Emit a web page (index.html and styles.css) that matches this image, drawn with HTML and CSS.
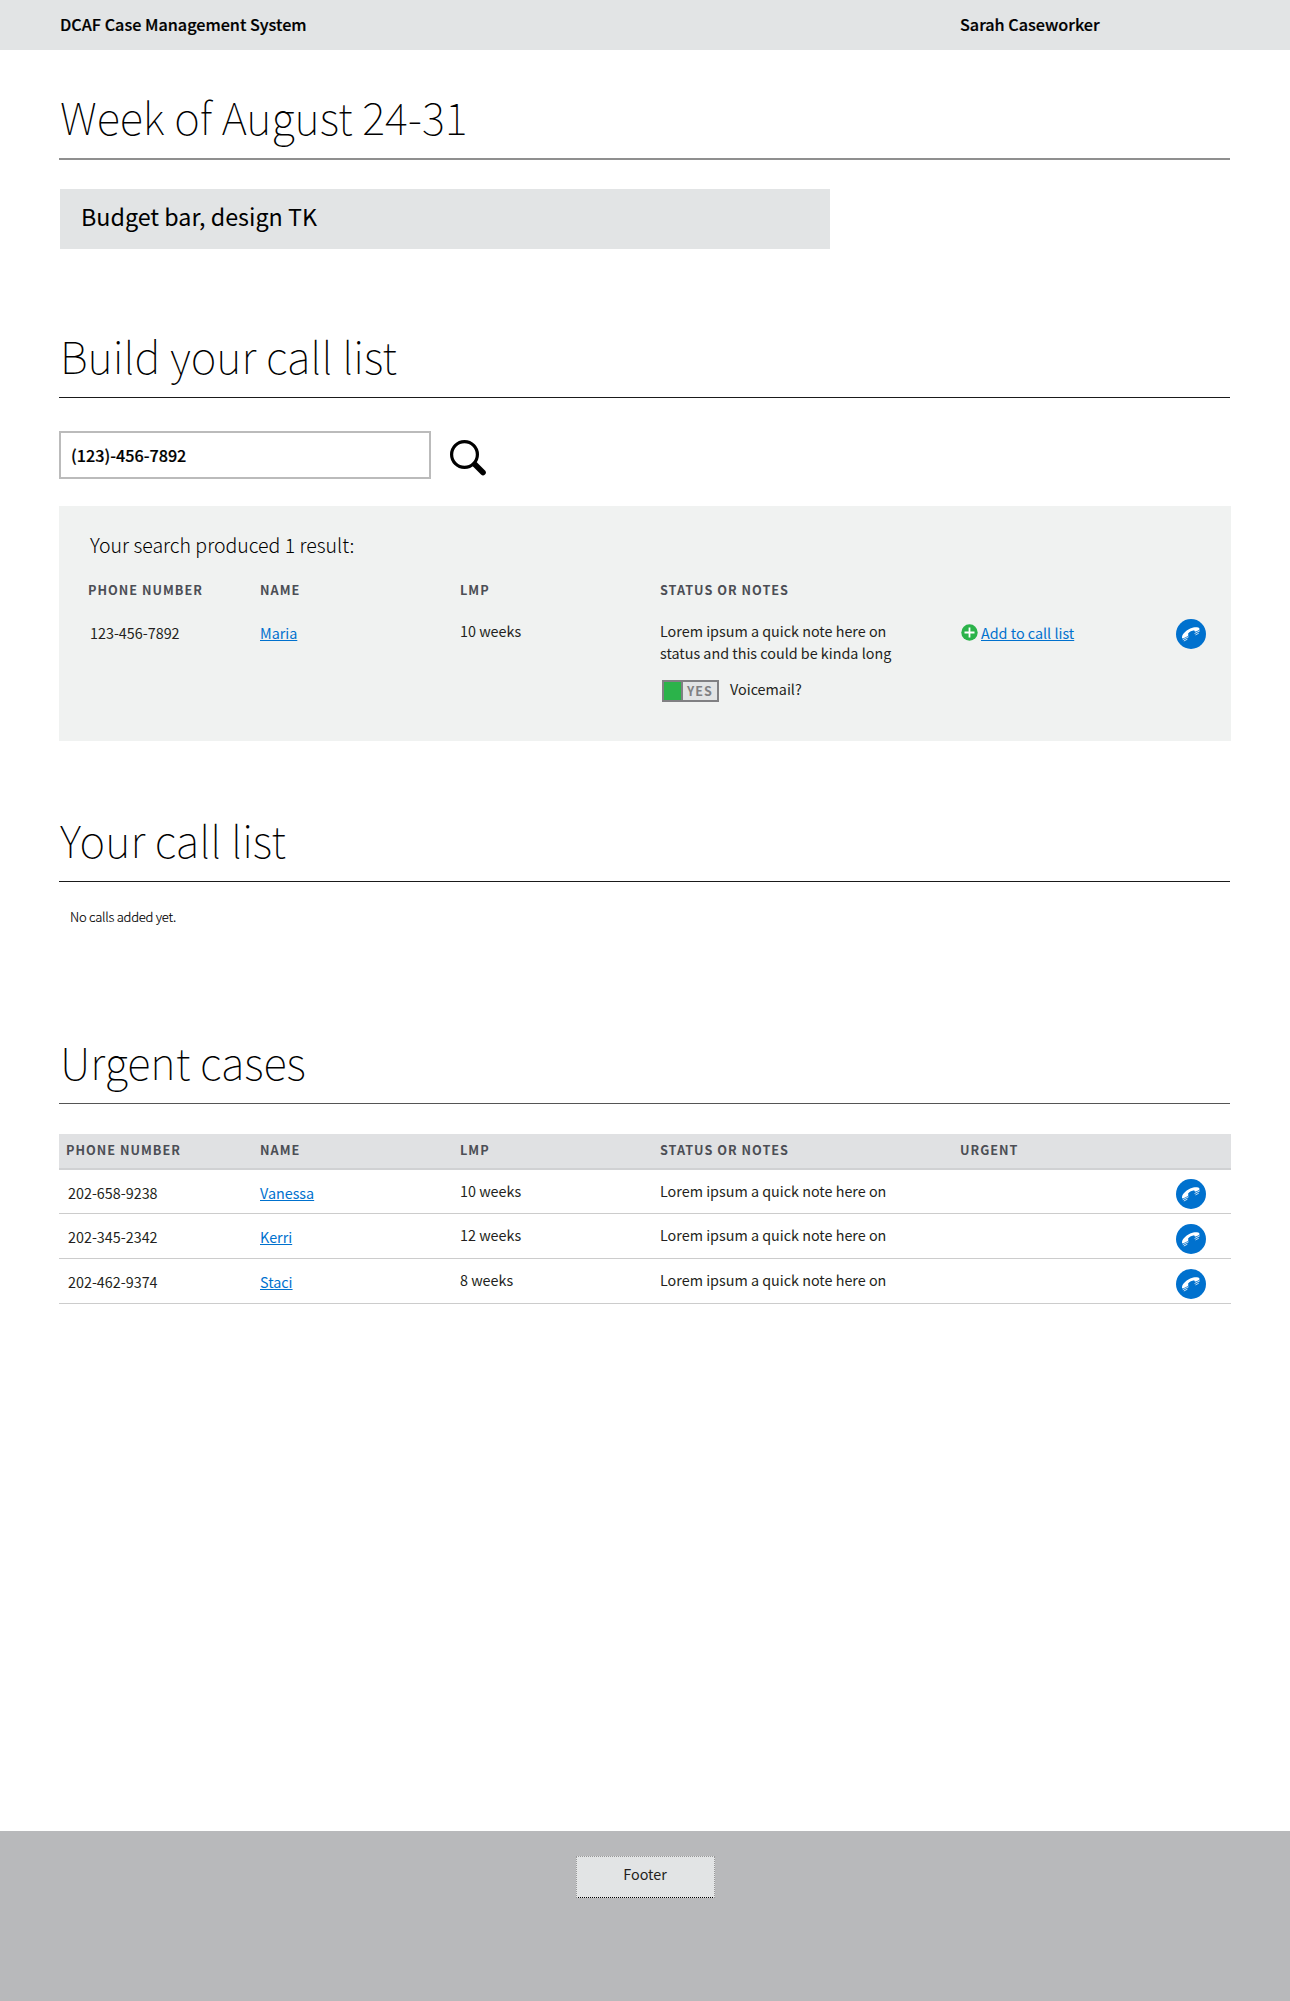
FILE: index.html
```html
<!DOCTYPE html>
<html lang="en">
<head>
<meta charset="utf-8">
<title>DCAF Case Management System</title>
<link rel="stylesheet" href="styles.css">
</head>
<body>
<svg class="sprite" aria-hidden="true">
  <symbol id="phone" viewBox="0 0 30 30">
    <circle cx="15" cy="15" r="15" fill="#0071ce"/>
    <path fill="#fff" d="M6 18.800C5.900 17.300 6.500 15.700 7.600 14.500C9.500 12.300 11.800 10.500 14.200 9.500C16.600 8.500 19 8 21 8.200C22.600 8.400 23.400 9 23.500 9.900C23.500 10.500 23.200 10.900 22.600 11.200L19.900 12.500C19.300 12.800 18.700 12.500 18.500 12L18.200 11.200C16 11.500 13.600 12.700 12.100 14.600L12.300 15.800C12.400 16.500 12.100 17 11.500 17.300L7.500 19.300C6.700 19.600 6.100 19.500 6 18.800Z"/>
    <path stroke="#fff" stroke-width=".8" fill="none" d="M18.600 14.500l5.200-2.700M19.500 15.900l3.300-1.700M6.800 20.700l5.800-2.900M7.800 22l3.600-1.800"/>
  </symbol>
</svg>

<header class="topbar">
  <strong class="brand">DCAF Case Management System</strong>
  <strong class="user">Sarah Caseworker</strong>
</header>

<main class="page">
  <section class="week">
    <h2 class="title title-week"><span>Week of August 24-31</span></h2>
    <div class="budget"><span>Budget bar, design TK</span></div>
  </section>

  <section class="build">
    <h2 class="title"><span>Build your call list</span></h2>
    <div class="search">
      <div class="search-input"><span>(123)-456-7892</span></div>
      <svg class="search-icon" viewBox="0 0 36 36">
        <circle cx="14.500" cy="14.500" r="12.900" fill="none" stroke="#000" stroke-width="3.200"/>
        <path d="M25 24.500l8 8" stroke="#000" stroke-width="5.600" stroke-linecap="round"/>
      </svg>
    </div>
    <div class="results">
      <p class="results-title"><span>Your search produced 1 result:</span></p>
      <div class="row labels">
        <span>Phone number</span><span>Name</span><span>LMP</span><span>Status or notes</span>
      </div>
      <div class="row entry">
        <span class="phone">123-456-7892</span>
        <span class="name"><a href="#">Maria</a></span>
        <span>10 weeks</span>
        <div class="notes">
          <p>Lorem ipsum a quick note here on<br>status and this could be kinda long</p>
          <div class="voicemail">
            <span class="toggle"><i class="knob"></i><b>YES</b></span>
            <span class="voicemail-label">Voicemail?</span>
          </div>
        </div>
        <div class="add">
          <svg class="plus" viewBox="0 0 17 17"><circle cx="8.500" cy="8.500" r="8.200" fill="#2bb34a"/><path d="M8.500 3.500v10M3.500 8.500h10" stroke="#fff" stroke-width="1.800"/></svg>
          <a href="#">Add to call list</a>
        </div>
        <svg class="call"><use href="#phone"/></svg>
      </div>
    </div>
  </section>

  <section class="calls">
    <h2 class="title title-calls"><span>Your call list</span></h2>
    <p class="empty"><span>No calls added yet.</span></p>
  </section>

  <section class="urgent">
    <h2 class="title title-urgent"><span>Urgent cases</span></h2>
    <div class="table">
      <div class="row labels">
        <span>Phone number</span><span>Name</span><span>LMP</span><span>Status or notes</span><span>Urgent</span>
      </div>
      <div class="row entry first">
        <span class="phone">202-658-9238</span><span class="name"><a href="#">Vanessa</a></span><span>10 weeks</span><span>Lorem ipsum a quick note here on</span><span></span><svg class="call"><use href="#phone"/></svg>
      </div>
      <div class="row entry">
        <span class="phone">202-345-2342</span><span class="name"><a href="#">Kerri</a></span><span>12 weeks</span><span>Lorem ipsum a quick note here on</span><span></span><svg class="call"><use href="#phone"/></svg>
      </div>
      <div class="row entry">
        <span class="phone">202-462-9374</span><span class="name"><a href="#">Staci</a></span><span>8 weeks</span><span>Lorem ipsum a quick note here on</span><span></span><svg class="call"><use href="#phone"/></svg>
      </div>
    </div>
  </section>
</main>

<footer class="footer"><span class="footer-button">Footer</span></footer>
</body>
</html>
```

FILE: styles.css
```css
* { box-sizing: border-box; }
body {
  margin: 0;
  height: 2001px;
  display: flex;
  flex-direction: column;
  background: #fff;
  color: #231f20;
  font: 14.35px/22px "Noto Sans CJK SC", "Open Sans", sans-serif;
}
p, h2 { margin: 0; font-weight: inherit; }
a { color: #0071ce; text-decoration: underline; text-decoration-thickness: 1px; text-underline-offset: 1px; }
.sprite { display: none; }

.topbar {
  display: grid;
  grid-template-columns: 900px 1fr;
  height: 50px;
  padding-left: 60px;
  background: #e2e4e5;
  color: #000;
  font-size: 16.2px;
  line-height: 48px;
}
.brand, .user { font-weight: 500; -webkit-text-stroke: 0.2px #000; }

.page { width: 1172px; margin-left: 59px; flex: 1; }
.title {
  width: 1171px;
  padding: 0 0 12px 1px;
  border-bottom: 1px solid #1a1a1a;
  color: #000;
  font-size: 43.700px;
  font-weight: 100;
  line-height: 59px;
}
.title-week { border-bottom: 2px solid #8f8f8f; }
.title-urgent { border-bottom-color: #555; }

.week { padding-top: 37px; }
.budget {
  width: 770px;
  height: 60px;
  margin: 29px 0 0 1px;
  padding-left: 21px;
  background: #e2e4e5;
  color: #000;
  font-size: 23.3px;
  line-height: 54px;
}

.build { padding-top: 77px; }
.search { display: flex; align-items: center; gap: 19px; margin-top: 33px; height: 48px; }
.search-input {
  width: 372px;
  height: 48px;
  padding-left: 10px;
  border: 2px solid #bbb;
  color: #000;
  font-size: 16.2px;
  font-weight: 500;
  line-height: 44px;
  -webkit-text-stroke: 0.2px #000;
}
.search-icon { width: 36px; height: 36px; margin-top: 5px; }

.results { height: 235px; margin-top: 27px; padding-top: 23px; background: #f0f2f1; }
.results-title { padding-left: 31px; color: #000; font-size: 19.5px; font-weight: 300; line-height: 32px; }

.row { display: grid; grid-template-columns: 201px 200px 200px 300px 216px 30px; }
.labels {
  color: #4c4e55;
  font-size: 12.700px;
  font-weight: 700;
  letter-spacing: 1px;
  line-height: 20px;
  text-transform: uppercase;
}
.results .labels { margin-top: 19px; }
.results .labels > :first-child { padding-left: 29px; }
.results .entry { margin-top: 20px; }
.results .phone { padding-left: 31px; }
.results .call { margin-top: -1px; }
.phone, .name { padding-top: 2px; }
.voicemail { display: flex; gap: 11px; margin: 16px 0 0 2px; }
.voicemail-label { margin-top: -2px; }
.toggle {
  display: flex;
  width: 57px;
  height: 22px;
  border: 2px solid #808083;
  background: #e2e4e5;
}
.knob { width: 19px; background: #2bb34a; border-right: 2px solid #808083; }
.toggle b { margin-left: 4px; color: #808083; font-size: 12.500px; letter-spacing: 1px; line-height: 18px; }
.add { display: flex; align-items: flex-start; gap: 3px; padding: 2px 0 0 1px; }
.plus { width: 17px; height: 17px; margin-top: 2px; }
.call { width: 30px; height: 30px; }

.calls { padding-top: 69px; }
.empty { height: 150px; padding: 24px 0 0 11px; color: #000; font-size: 13px; font-weight: 300; letter-spacing: -0.25px; -webkit-text-stroke: 0.15px #000; }

.table { margin-top: 30px; }
.table .labels { height: 36px; padding-top: 6px; background: #e0e1e3; border-bottom: 2px solid #d0d1d3; }
.table .labels > :first-child { padding-left: 7px; }
.table .entry { height: 45px; padding-top: 10px; border-bottom: 1px solid #ccc; }
.table .first { height: 44px; }
.table .first .call { margin-top: -1px; }
.table .phone { padding-left: 9px; }

.footer { height: 170px; padding-top: 25px; background: #b8b9bb; display: flex; justify-content: center; align-items: flex-start; }
.footer-button {
  width: 139px;
  height: 42px;
  border: 1px dotted #999;
  border-bottom-color: #000;
  background: #e2e4e5;
  line-height: 34px;
  text-align: center;
}
```
